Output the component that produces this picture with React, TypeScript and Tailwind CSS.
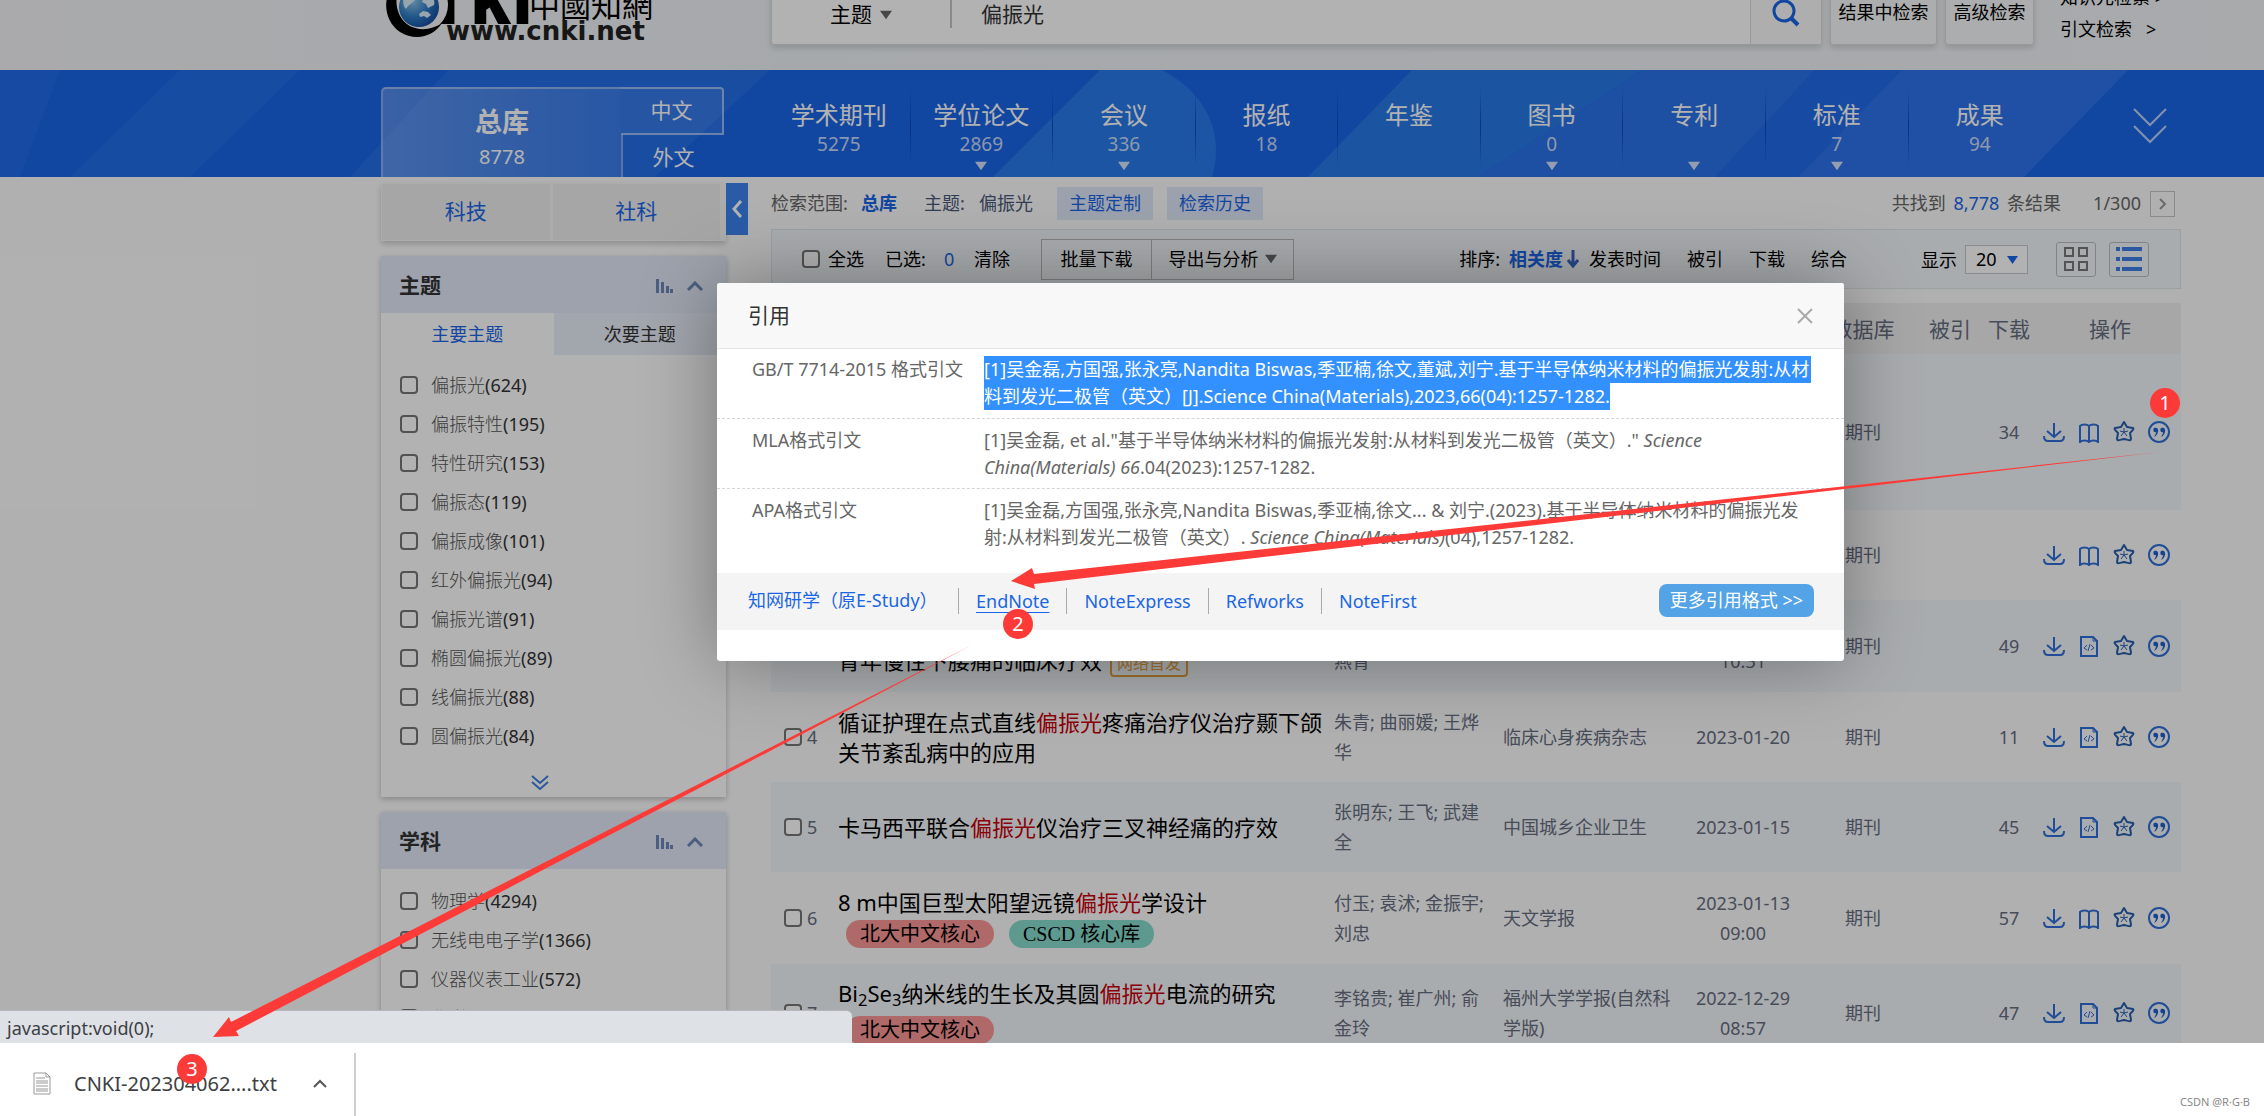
import React from "react";

const FONT = "font-['Noto_Sans','Noto_Sans_CJK_SC',sans-serif]";

function Caret({ className = "" }: { className?: string }) {
  return (
    <svg width="14" height="10" viewBox="0 0 14 10" className={className} aria-hidden="true">
      <path d="M0 0H14L7 10Z" fill="currentColor" />
    </svg>
  );
}

function Tick({ id, label }: { id: string; label?: string }) {
  return (
    <input
      type="checkbox"
      id={id}
      aria-label={label}
      className="size-[18px] shrink-0 appearance-none rounded-[4px] border-2 border-[#767676] bg-white"
    />
  );
}

function Logo() {
  return (
    <svg width="280" height="82" viewBox="380 -30 280 82" aria-label="CNKI" className="block">
      <defs>
        <radialGradient id="globe" cx="0.35" cy="0.35" r="0.8">
          <stop offset="0" stopColor="#8fc4ea" />
          <stop offset="0.5" stopColor="#2f7cc4" />
          <stop offset="1" stopColor="#0e3f96" />
        </radialGradient>
      </defs>
      <g fill="#000" fontFamily="'Open Sans','Noto Sans',sans-serif" fontWeight="800" fontSize="60">
        <text x="409" y="24">N</text>
        <text x="470" y="24">K</text>
        <text x="512" y="24">I</text>
      </g>
      <circle cx="421" cy="5" r="27" fill="#f4f4f6" />
      <path
        d="M404 -27C382 -12 380 18 400 32C416 42 434 36 442 23C428 33 408 31 400 16C392 0 398 -18 412 -27Z"
        fill="#000"
      />
      <circle cx="419" cy="7" r="20" fill="url(#globe)" />
      <path
        d="M405 -4C410 -8 417 -6 416 -1C413 3 409 4 406 9C403 6 402 0 405 -4ZM419 14L423 11L428 12L431 15L427 18L424 16L420 17ZM424 -4C430 -7 436 -1 434 5L428 8L426 4L422 2Z"
        fill="#d9edf8"
      />
      <text x="529" y="17" fontFamily="'Noto Sans CJK TC',sans-serif" fontSize="31" fontWeight="400">
        中國知網
      </text>
      <text x="446" y="40" fontFamily="'DejaVu Sans',sans-serif" fontSize="26" fontWeight="700" fill="#222">
        www.cnki.net
      </text>
    </svg>
  );
}

function TopBar() {
  return (
    <header className="-mt-[30px] flex h-[100px] items-start bg-linear-to-r from-[#f4f4f6] via-[#eef3f6] via-35% to-[#f1f4f6] pl-[380px]">
      <a href="#home" className="w-[391px]">
        <Logo />
      </a>
      <div className="flex h-[75px] flex-1 rounded-b-[3px] border border-[#dcdcdc] bg-white shadow-[0_3px_6px_rgba(0,0,0,0.15)]">
        <button className="flex w-[178px] items-center gap-2 pt-[14px] pl-[58px] text-[21px] text-black">
          主题
          <Caret className="w-3 text-[#666]" />
        </button>
        <span className="h-[57px] w-[2px] bg-[#c4c4c4]" />
        <input
          aria-label="检索词"
          defaultValue="偏振光"
          className="h-[84px] min-w-0 flex-1 bg-transparent pl-[29px] text-[21px] text-[#333] outline-none"
        />
        <button aria-label="检索" className="flex w-[71px] justify-center border-l border-[#dcdcdc] bg-[#fafafa] pt-[26px]">
          <svg width="32" height="32" viewBox="0 0 32 32" fill="none" stroke="#1b66e7" strokeWidth="3">
            <circle cx="14" cy="14" r="10" />
            <path d="M21 21L28 28" strokeWidth="4" />
          </svg>
        </button>
      </div>
      <button className="ml-[8px] h-[75px] w-[107px] rounded-b-[3px] border border-[#dcdcdc] bg-[#f7f8f9] pt-[10px] text-[18px] text-black shadow-[0_3px_6px_rgba(0,0,0,0.15)]">
        结果中检索
      </button>
      <button className="ml-[8px] h-[75px] w-[89px] rounded-b-[3px] border border-[#dcdcdc] bg-[#f7f8f9] pt-[10px] text-[18px] text-black shadow-[0_3px_6px_rgba(0,0,0,0.15)]">
        高级检索
      </button>
      <div className="flex w-[230px] flex-col pt-[11px] pl-[26px] text-[18px] leading-[32px] whitespace-pre text-black">
        <a href="#k">知识元检索 &gt;</a>
        <a href="#c">引文检索 {"  "}&gt;</a>
      </div>
    </header>
  );
}

const CATEGORIES = [
  { name: "学术期刊", count: "5275", more: false },
  { name: "学位论文", count: "2869", more: true },
  { name: "会议", count: "336", more: true },
  { name: "报纸", count: "18", more: false },
  { name: "年鉴", count: "", more: false },
  { name: "图书", count: "0", more: true },
  { name: "专利", count: "", more: true },
  { name: "标准", count: "7", more: true },
  { name: "成果", count: "94", more: false },
];

function NavBand() {
  return (
    <nav className="relative flex h-[107px] items-stretch bg-[#1b66e7] pl-[381px] text-white">
      <svg
        className="absolute inset-0 size-full"
        viewBox="0 0 2264 107"
        preserveAspectRatio="none"
        aria-hidden="true"
      >
        <path d="M0 0H60L20 107H0Z" fill="#216be8" />
        <path d="M180 0H300L190 107H70Z" fill="#226dea" />
        <path d="M448 0H770L655 107H350Z" fill="#256fe9" />
        <path d="M1100 0H1162C1200 20 1216 50 1216 80C1216 90 1214 100 1212 107H993Z" fill="#287aea" />
        <path d="M1412 0H1642L1479 107H1308Z" fill="#287ae9" />
        <path d="M1642 0H1815L1715 107H1479Z" fill="#2a72ea" />
        <path d="M1815 0H1902L1798 107H1715Z" fill="#226bea" />
        <path d="M1902 0H2128L2024 107H1798Z" fill="#2f73ec" />
      </svg>
      <div className="relative mt-[17px] flex w-[343px]">
        <button className="flex w-[240px] flex-col items-center rounded-tl-[5px] border-t-2 border-l-2 border-white/40 bg-linear-to-r from-white/25 to-white/10 pt-[14px]">
          <span className="text-[27px] leading-[38px] font-bold">总库</span>
          <span className="text-[20px] leading-[32px]">8778</span>
        </button>
        <div className="flex flex-1 flex-col text-[21px]">
          <button className="h-[48px] rounded-tr-[4px] border-t-2 border-r-2 border-b-2 border-white/50 bg-white/8">
            中文
          </button>
          <button className="flex-1 border-l-2 border-white/40 pt-[4px]">外文</button>
        </div>
      </div>
      <ul className="relative ml-[44px] flex flex-1">
        {CATEGORIES.map((c, i) => (
          <li key={c.name} className="flex flex-1 pt-[17px]">
            <a href={"#" + i} className="flex flex-1 flex-col items-center pt-[9px]">
              <span className="text-[24px] leading-[37px]">{c.name}</span>
              <span className="h-[22px] text-[19px] leading-[22px] text-white/75">{c.count}</span>
              {c.more && <Caret className="mt-[6px] w-3 text-white/80" />}
            </a>
            {i < CATEGORIES.length - 1 && (
              <span className="h-[80px] w-px bg-linear-to-b from-transparent via-[#0a48bb] to-transparent" />
            )}
          </li>
        ))}
      </ul>
      <button aria-label="更多" className="relative flex w-[213px] items-start pt-[38px] pl-[82px]">
        <svg width="34" height="38" viewBox="0 0 34 38" fill="none" stroke="#fff" strokeOpacity="0.7" strokeWidth="2">
          <path d="M1 1L17 17L33 1M1 18L17 34L33 18" />
        </svg>
      </button>
    </nav>
  );
}

type FacetItem = [string, number];

const THEME_ITEMS: FacetItem[] = [
  ["偏振光", 624],
  ["偏振特性", 195],
  ["特性研究", 153],
  ["偏振态", 119],
  ["偏振成像", 101],
  ["红外偏振光", 94],
  ["偏振光谱", 91],
  ["椭圆偏振光", 89],
  ["线偏振光", 88],
  ["圆偏振光", 84],
];

const SUBJECT_ITEMS: FacetItem[] = [
  ["物理学", 4294],
  ["无线电电子学", 1366],
  ["仪器仪表工业", 572],
  ["化学", 351],
];

function FacetHead({ title }: { title: string }) {
  return (
    <div className="flex h-[57px] items-center bg-[#e1e9f7] pt-[2px] pr-[23px] pl-[18px]">
      <h3 className="flex-1 text-[21px] font-bold text-[#333]">{title}</h3>
      <svg width="18" height="14" viewBox="0 0 18 14" fill="#6f88b8" className="mr-[13px]" aria-hidden="true">
        <path d="M0 0H3V14H0ZM5 3H8V14H5ZM10 7H13V14H10ZM14 10H17V14H14Z" />
      </svg>
      <svg width="16" height="10" viewBox="0 0 16 10" fill="none" stroke="#6f88b8" strokeWidth="3" aria-hidden="true">
        <path d="M1 9L8 2L15 9" />
      </svg>
    </div>
  );
}

function FacetList({ items, prefix }: { items: FacetItem[]; prefix: string }) {
  return (
    <ul className="pl-[19px]">
      {items.map(([name, n], i) => (
        <li key={name} className="flex h-[39px] items-center gap-[13px]">
          <Tick id={prefix + i} />
          <label htmlFor={prefix + i} className="text-[18px] text-[#333]">
            <span className="font-['Noto_Sans_CJK_SC',sans-serif] font-light text-[#555]">{name}</span>({n})
          </label>
        </li>
      ))}
    </ul>
  );
}

function Sidebar() {
  return (
    <aside className="w-[345px] shrink-0 pt-[6px]">
      <div className="flex gap-[3px] bg-[#f6f6f6] py-px pr-[6px] pl-px text-[21px] text-[#1b66e7] shadow-[0_3px_6px_rgba(0,0,0,0.2)]">
        <button className="h-[56px] flex-1 bg-[#eeeeee]">科技</button>
        <button className="h-[56px] flex-1 bg-[#eeeeee]">社科</button>
      </div>
      <section className="mt-[15px] bg-white shadow-[0_2px_6px_rgba(0,0,0,0.25)]">
        <FacetHead title="主题" />
        <div className="flex h-[42px] text-[18px]">
          <button className="flex-1 text-[#1b66e7]">主要主题</button>
          <button className="flex-1 bg-[#e9eef8] text-[#333]">次要主题</button>
        </div>
        <div className="pt-[10px]">
          <FacetList items={THEME_ITEMS} prefix="theme" />
        </div>
        <button aria-label="展开" className="flex h-[42px] w-full items-end justify-center pr-[27px] pb-[7px]">
          <svg width="18" height="15" viewBox="0 0 18 15" fill="none" stroke="#3f7fe0" strokeWidth="2">
            <path d="M1 1L9 8L17 1M1 7L9 14L17 7" />
          </svg>
        </button>
      </section>
      <section className="mt-[15px] bg-white shadow-[0_2px_6px_rgba(0,0,0,0.25)]">
        <FacetHead title="学科" />
        <div className="pt-[12px]">
          <FacetList items={SUBJECT_ITEMS} prefix="subject" />
        </div>
      </section>
    </aside>
  );
}

function Toolbar() {
  return (
    <div className="flex h-[60px] items-center border border-[#dfe5e9] bg-[#f3f6f9] pr-[31px] pl-[30px] text-[18px] whitespace-nowrap text-black">
      <Tick id="all" />
      <label htmlFor="all" className="ml-[8px]">全选</label>
      <span className="ml-[21px] w-[59px]">已选:</span>
      <span className="w-[30px] text-[#1b66e7]">0</span>
      <button>清除</button>
      <button className="ml-[31px] h-[41px] w-[111px] border border-[#b8b8b8]">批量下载</button>
      <button className="flex h-[41px] w-[142px] items-center justify-center gap-[6px] border border-l-0 border-[#b8b8b8]">
        导出与分析
        <Caret className="w-3 text-[#666]" />
      </button>
      <div className="flex flex-1 items-center justify-end">
        <span className="mr-[9px]">排序:</span>
        <button className="flex items-center gap-[4px] font-bold text-[#1b66e7]">
          相关度
          <svg width="12" height="18" viewBox="0 0 12 18" fill="none" stroke="#3a66c0" strokeWidth="3" aria-hidden="true">
            <path d="M6 0V15M1 10L6 16L11 10" />
          </svg>
        </button>
        <button className="ml-[10px]">发表时间</button>
        <button className="ml-[26px]">被引</button>
        <button className="ml-[26px]">下载</button>
        <button className="ml-[26px]">综合</button>
      </div>
      <label htmlFor="size" className="mr-[8px] ml-[74px] pt-[3px]">显示</label>
      <div className="relative">
        <select
          id="size"
          className="h-[29px] w-[63px] appearance-none border border-[#c3c9ce] bg-white pl-[10px] text-[18px] leading-[24px]"
        >
          <option>20</option>
        </select>
        <Caret className="pointer-events-none absolute top-[10px] right-[10px] w-[11px] text-[#1b66e7]" />
      </div>
      <button aria-label="网格" className="ml-[28px] flex h-[35px] w-[40px] items-center justify-center rounded-[3px] border border-[#b8bec4]">
        <svg width="26" height="26" viewBox="0 0 26 26" fill="none" stroke="#777" strokeWidth="2">
          <path d="M2 2H10V10H2ZM16 2H24V10H16ZM2 16H10V24H2ZM16 16H24V24H16Z" />
        </svg>
      </button>
      <button aria-label="列表" className="ml-[13px] flex h-[35px] w-[40px] items-center justify-center rounded-[3px] border border-[#b8bec4]">
        <svg width="26" height="24" viewBox="0 0 26 24" fill="#3f7fe8">
          <path d="M0 0H4V4H0ZM6 0H26V4H6ZM0 10H4V14H0ZM6 10H26V14H6ZM0 20H4V24H0ZM6 20H26V24H6Z" />
        </svg>
      </button>
    </div>
  );
}

function RowActions({ book }: { book: boolean }) {
  return (
    <div className="flex items-center gap-[13px] text-[#2f6fd8]">
      <button aria-label="下载">
        <svg width="22" height="22" viewBox="0 0 22 22" fill="none" stroke="currentColor" strokeWidth="2">
          <path d="M11 2V16M4 10L11 16L18 10M1 15C1 18 2 20 5 20H17C20 20 21 18 21 15" />
        </svg>
      </button>
      <button aria-label="阅读">
        {book ? (
          <svg width="22" height="22" viewBox="0 0 22 22" fill="none" stroke="currentColor" strokeWidth="2">
            <path d="M11 5C9 3 4 3 2 5V21C4 19 9 19 11 21C13 19 18 19 20 21V5C18 3 13 3 11 5ZM11 5V21" />
          </svg>
        ) : (
          <svg width="22" height="22" viewBox="0 0 22 22" fill="none" stroke="currentColor" strokeWidth="2">
            <path d="M3 2H15L19 6V21H3Z" />
            <path d="M15 2V6H19M9 10L6 13L9 15M13 10L16 13L13 15M12 9L10 16" strokeWidth="1" />
          </svg>
        )}
      </button>
      <button aria-label="收藏">
        <svg width="22" height="22" viewBox="0 0 22 22" fill="none" stroke="#255fae" strokeWidth="2" strokeLinejoin="round">
          <path d="M11 1L14 6L20 7C21 8 20 9 17 12L18 18C18 20 16 19 11 18C6 19 4 20 4 18L5 12C2 9 1 8 2 7L8 6Z" />
          <path d="M11 7V11M7 10L11 11L15 10M8 15L11 11L14 15" strokeWidth="1" />
        </svg>
      </button>
      <button aria-label="引用">
        <svg width="22" height="22" viewBox="0 0 22 22">
          <circle cx="11" cy="11" r="10" fill="none" stroke="currentColor" strokeWidth="2" />
          <path
            d="M6 7C8 6 11 7 10 11C9 14 8 15 6 16C7 14 8 13 8 11C5 12 5 8 6 7ZM13 7C15 6 18 7 17 11C16 14 15 15 13 16C14 14 15 13 15 11C12 12 12 8 13 7Z"
            fill="#1f5fd0"
          />
        </svg>
      </button>
    </div>
  );
}

function Hit() {
  return <em className="text-[#c8000c] not-italic">偏振光</em>;
}

function Tag({ green, children }: { green?: boolean; children: React.ReactNode }) {
  return (
    <span
      className={
        "inline-block h-[28px] rounded-full px-[14px] font-['Liberation_Serif','Noto_Sans_CJK_SC',serif] text-[20px] leading-[28px] text-black " +
        (green ? "bg-[#86dbcd]" : "bg-[#fb9795]")
      }
    >
      {children}
    </span>
  );
}

interface Row {
  height: string;
  title: React.ReactNode;
  authors: string;
  source: string;
  date: string;
  downloads: string;
  book: boolean;
}

const ROWS: Row[] = [
  {
    height: "h-[156px]",
    title: (
      <>
        基于半导体纳米材料的
        <Hit />
        发射:从材料到发光二极管（英文）
      </>
    ),
    authors: "吴金磊; 方国强; 张永亮",
    source: "Science China(Materials)",
    date: "2023",
    downloads: "34",
    book: true,
  },
  { height: "h-[90px]", title: <Hit />, authors: "", source: "", date: "", downloads: "", book: true },
  {
    height: "h-[92px]",
    title: (
      <>
        <Hit />
        <br />
        青年慢性下腰痛的临床疗效
        <span className="ml-[8px] inline-block rounded-[4px] border-2 border-[#e6a03c] px-[5px] text-[16px] leading-[24px] text-[#e6a03c]">
          网络首发
        </span>
      </>
    ),
    authors: "王明华; 李建国; 陈燕青",
    source: "",
    date: "2023-01-28 10:31",
    downloads: "49",
    book: false,
  },
  {
    height: "h-[90px]",
    title: (
      <>
        循证护理在点式直线
        <Hit />
        疼痛治疗仪治疗颞下颌关节紊乱病中的应用
      </>
    ),
    authors: "朱青; 曲丽媛; 王烨华",
    source: "临床心身疾病杂志",
    date: "2023-01-20",
    downloads: "11",
    book: false,
  },
  {
    height: "h-[90px]",
    title: (
      <>
        卡马西平联合
        <Hit />
        仪治疗三叉神经痛的疗效
      </>
    ),
    authors: "张明东; 王飞; 武建全",
    source: "中国城乡企业卫生",
    date: "2023-01-15",
    downloads: "45",
    book: false,
  },
  {
    height: "h-[92px]",
    title: (
      <>
        8 m中国巨型太阳望远镜
        <Hit />
        学设计
        <span className="flex gap-[15px] pt-[3px] pb-[2px] pl-[8px]">
          <Tag>北大中文核心</Tag>
          <Tag green>CSCD 核心库</Tag>
        </span>
      </>
    ),
    authors: "付玉; 袁沭; 金振宇; 刘忠",
    source: "天文学报",
    date: "2023-01-13 09:00",
    downloads: "57",
    book: true,
  },
  {
    height: "h-[98px]",
    title: (
      <>
        Bi<sub>2</sub>Se<sub>3</sub>纳米线的生长及其圆
        <Hit />
        电流的研究
        <span className="flex pt-[8px] pb-[4px] pl-[8px]">
          <Tag>北大中文核心</Tag>
        </span>
      </>
    ),
    authors: "李铭贵; 崔广州; 俞金玲",
    source: "福州大学学报(自然科学版)",
    date: "2022-12-29 08:57",
    downloads: "47",
    book: false,
  },
];

function ResultTable() {
  return (
    <table className="mt-[14px] w-full table-fixed border-collapse text-[18px] leading-[30px] text-[#666d80]">
      <colgroup>
        <col className="w-[67px]" />
        <col />
        <col className="w-[169px]" />
        <col className="w-[182px]" />
        <col className="w-[116px]" />
        <col className="w-[124px]" />
        <col className="w-[50px]" />
        <col className="w-[68px]" />
        <col className="w-[138px]" />
      </colgroup>
      <thead>
        <tr className="h-[51px] bg-[#f0f0f0] text-[21px] whitespace-nowrap">
          <th />
          <th className="font-normal">题名</th>
          <th className="font-normal">作者</th>
          <th className="font-normal">来源</th>
          <th className="font-normal">发表时间</th>
          <th className="font-normal">数据库</th>
          <th className="font-normal">被引</th>
          <th className="font-normal">下载</th>
          <th className="pr-[4px] font-normal">操作</th>
        </tr>
      </thead>
      <tbody>
        {ROWS.map((r, i) => (
          <tr key={i} className={r.height + (i % 2 === 0 ? " bg-[#f3f6f9]" : " bg-[#fdfdfd]")}>
            <td className="pl-[13px]">
              <div className="flex items-center gap-[5px]">
                <Tick id={"row" + i} label={"选择 " + (i + 1)} />
                <span>{i + 1}</span>
              </div>
            </td>
            <td className="text-[22px] text-black">{r.title}</td>
            <td className="pr-[12px]">{r.authors}</td>
            <td className="pr-[10px]">{r.source}</td>
            <td className="px-[4px] text-center">{r.date}</td>
            <td className="text-center">期刊</td>
            <td />
            <td className="text-center">{r.downloads}</td>
            <td>
              <RowActions book={r.book} />
            </td>
          </tr>
        ))}
      </tbody>
    </table>
  );
}

function Results() {
  return (
    <main className="min-w-0 flex-1">
      <div className="flex h-[52px] items-start pt-[10px] text-[18px] leading-[33px] whitespace-nowrap text-[#666]">
        <span className="w-[90px]">检索范围:</span>
        <a href="#all" className="font-bold text-[#1b66e7]">总库</a>
        <span className="ml-[27px] w-[55px] text-[#4a5878]">主题:</span>
        <span className="text-[#4a5878]">偏振光</span>
        <button className="ml-[24px] bg-[#dfe8f8] px-[12px] text-[#1b66e7]">主题定制</button>
        <button className="ml-[14px] bg-[#dfe8f8] px-[12px] text-[#1b66e7]">检索历史</button>
        <div className="flex flex-1 justify-end pr-[6px]">
          <span>
            共找到 <b className="mx-[3px] font-normal text-[#1b66e7]">8,778</b> 条结果
          </span>
          <span className="ml-[32px]">1/300</span>
          <button aria-label="下一页" className="mt-[4px] ml-[9px] flex h-[26px] w-[25px] items-center justify-center border border-[#c6c6c6]">
            <svg width="8" height="12" viewBox="0 0 8 12" fill="none" stroke="#999" strokeWidth="2">
              <path d="M1 1L6 6L1 11" />
            </svg>
          </button>
        </div>
      </div>
      <Toolbar />
      <ResultTable />
    </main>
  );
}

function CiteDialog() {
  return (
    <div
      role="dialog"
      aria-label="引用"
      className="absolute top-[283px] left-[717px] w-[1127px] rounded-[3px] bg-white pb-[31px] text-[18px] leading-[27px] text-[#666] shadow-[0_0_75px_rgba(0,0,0,0.35)]"
    >
      <div className="flex h-[66px] items-center rounded-t-[3px] border-b border-[#e6e6e6] bg-[#f8f8f8] pr-[31px] pl-[31px]">
        <h2 className="flex-1 text-[21px] text-[#333]">引用</h2>
        <button aria-label="关闭">
          <svg width="16" height="16" viewBox="0 0 16 16" fill="none" stroke="#aaa" strokeWidth="2">
            <path d="M1 1L15 15M15 1L1 15" />
          </svg>
        </button>
      </div>
      <dl>
        <div className="flex h-[70px] border-b border-dashed border-[#d5d5d5] pt-[7px] pl-[35px]">
          <dt className="w-[232px] whitespace-nowrap">GB/T 7714-2015 格式引文</dt>
          <dd className="w-[827px] whitespace-nowrap text-white">
            <span className="block bg-[#3390ff]">
              [1]吴金磊,方国强,张永亮,Nandita Biswas,季亚楠,徐文,董斌,刘宁.基于半导体纳米材料的偏振光发射:从材
            </span>
            <span className="inline-block bg-[#3390ff]">
              料到发光二极管（英文）[J].Science China(Materials),2023,66(04):1257-1282.
            </span>
          </dd>
        </div>
        <div className="flex h-[70px] border-b border-dashed border-[#d5d5d5] pt-[8px] pl-[35px]">
          <dt className="w-[232px]">MLA格式引文</dt>
          <dd className="w-[827px] whitespace-nowrap">
            [1]吴金磊, et al."基于半导体纳米材料的偏振光发射:从材料到发光二极管（英文）." <i>Science</i>
            <br />
            <i>China(Materials) 66</i>.04(2023):1257-1282.
          </dd>
        </div>
        <div className="flex h-[84px] pt-[8px] pl-[35px]">
          <dt className="w-[232px]">APA格式引文</dt>
          <dd className="w-[827px] whitespace-nowrap">
            [1]吴金磊,方国强,张永亮,Nandita Biswas,季亚楠,徐文... &amp; 刘宁.(2023).基于半导体纳米材料的偏振光发
            <br />
            射:从材料到发光二极管（英文）. <i>Science China(Materials)</i>(04),1257-1282.
          </dd>
        </div>
      </dl>
      <div className="flex h-[57px] items-center bg-[#f4f4f4] pr-[30px] pb-[2px] pl-[31px] whitespace-nowrap text-[#1b66e7]">
        <a href="#estudy" className="w-[210px]">知网研学（原E-Study）</a>
        <a href="#endnote" className="border-l border-[#aaa] px-[17px] leading-[26px]">
          <u className="underline-offset-4">EndNote</u>
        </a>
        <a href="#noteexpress" className="border-l border-[#aaa] px-[17px] leading-[26px]">NoteExpress</a>
        <a href="#refworks" className="border-l border-[#aaa] px-[17px] leading-[26px]">Refworks</a>
        <a href="#notefirst" className="border-l border-[#aaa] px-[17px] leading-[26px]">NoteFirst</a>
        <button className="ml-auto h-[33px] w-[155px] rounded-[8px] bg-[#53a3e6] text-white">
          更多引用格式 &gt;&gt;
        </button>
      </div>
    </div>
  );
}

function Step({ n, place }: { n: number; place: string }) {
  return (
    <span
      className={
        "absolute flex size-[30px] items-center justify-center rounded-full bg-[#fc3a38] text-[20px] leading-[30px] text-white " +
        place
      }
    >
      {n}
    </span>
  );
}

export default function App() {
  return (
    <div className={"relative flex h-screen flex-col overflow-hidden bg-white " + FONT}>
      <div className="relative min-h-0 flex-1 overflow-hidden bg-[#fdfdfd]">
        <TopBar />
        <NavBand />
        <div className="flex items-start pr-[83px] pl-[381px]">
          <Sidebar />
          <button aria-label="收起" className="mt-[6px] mr-[23px] flex h-[52px] w-[22px] items-center justify-center bg-[#3b83ee]">
            <svg width="12" height="18" viewBox="0 0 12 18" fill="none" stroke="#fff" strokeWidth="3">
              <path d="M10 1L3 9L10 17" />
            </svg>
          </button>
          <Results />
        </div>
        <div className="absolute inset-0 bg-black/30" />
        <CiteDialog />
        <div className="absolute bottom-0 left-0 h-[33px] w-[852px] rounded-tr-[6px] border-t border-[#b4b6ba] bg-[#dee1e6] pl-[7px] text-[18px] leading-[34px] text-[#3c4043]">
          javascript:void(0);
        </div>
      </div>
      <footer className="flex h-[73px] shrink-0 items-stretch bg-white">
        <button className="flex w-[356px] items-center self-end border-r-2 border-[#cfcfcf] pb-[2px] pl-[33px] text-[20px] leading-[61px] text-[#3c4043]">
          <svg width="18" height="23" viewBox="0 0 18 23" fill="#fff" stroke="#999" className="mr-[23px]">
            <path d="M1 1H13L17 5V22H1ZM13 1V5H17" />
            <path d="M3 6H12M3 9H15M3 11H15M3 14H15M3 17H15M3 19H15" />
          </svg>
          CNKI-202304062....txt
          <svg width="14" height="9" viewBox="0 0 14 9" fill="none" stroke="#555" strokeWidth="2" className="mr-[27px] ml-auto">
            <path d="M1 8L7 2L13 8" />
          </svg>
        </button>
        <span className="mt-auto mr-[14px] mb-[6px] ml-auto text-[11px] leading-[16px] text-[#888]">CSDN @R·G·B</span>
      </footer>
      <svg
        className="pointer-events-none absolute top-0 left-0"
        width="2264"
        height="1116"
        viewBox="0 0 2264 1116"
        fill="#fc3a38"
        aria-hidden="true"
      >
        <path d="M1011 581L1032 568L1034 574L2160 452L1034 584L1035 589Z" />
        <path d="M213 1037L229 1017L231 1022L972 645L236 1031L239 1036Z" />
      </svg>
      <Step n={1} place="left-[2150px] top-[388px]" />
      <Step n={2} place="left-[1003px] top-[609px]" />
      <Step n={3} place="left-[177px] top-[1054px]" />
    </div>
  );
}
